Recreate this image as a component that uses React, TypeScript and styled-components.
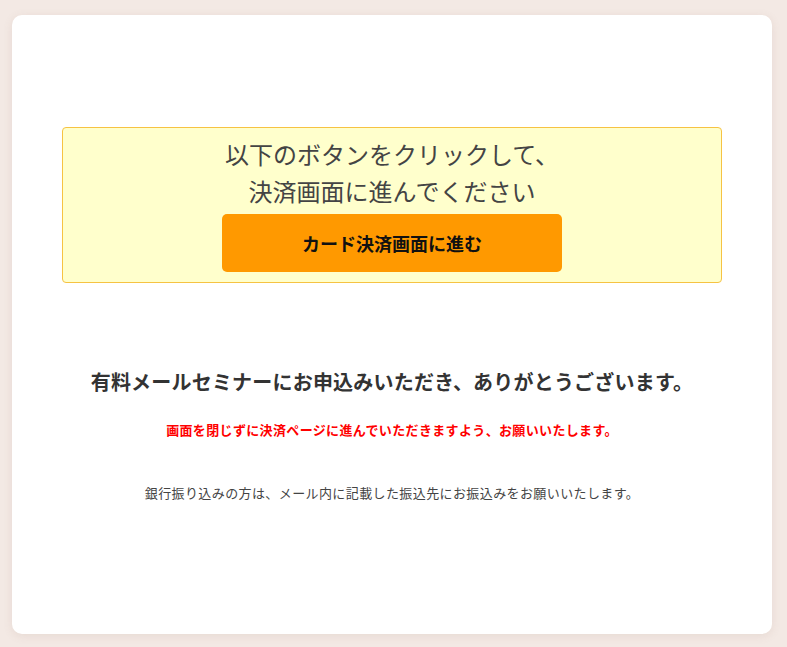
import React from "react";
import styled, { createGlobalStyle } from "styled-components";

const GlobalStyle = createGlobalStyle`
  html, body {
    margin: 0;
    padding: 0;
    background: #f3e9e4;
  }
  body {
    font-family: "Noto Sans CJK JP", "Noto Sans", sans-serif;
    color: #333;
  }
`;

const Page = styled.div`
  padding: 15px 15px 13px 12px;
  box-sizing: border-box;
  width: 787px;
  height: 647px;
`;

const Card = styled.main`
  width: 760px;
  height: 619px;
  box-sizing: border-box;
  background: #fff;
  border-radius: 10px;
  box-shadow: 0 2px 10px rgba(150, 110, 90, 0.12);
  padding: 112px 50px 0;
  display: flex;
  flex-direction: column;
  align-items: center;
`;

const Notice = styled.section`
  width: 100%;
  box-sizing: border-box;
  background: #ffffcc;
  border: 1px solid #f6c343;
  border-radius: 4px;
  padding: 7px 0 10px;
  display: flex;
  flex-direction: column;
  align-items: center;
`;

const Lead = styled.p`
  margin: 0;
  font-size: 24px;
  line-height: 37px;
  font-weight: 400;
  color: #444;
  text-align: center;
`;

const PayButton = styled.button`
  margin-top: 5px;
  width: 340px;
  height: 58px;
  border: none;
  border-radius: 5px;
  background: #ff9900;
  color: #111;
  font-family: inherit;
  font-size: 18px;
  font-weight: 700;
  cursor: pointer;
`;

const Thanks = styled.h1`
  margin: 84px 0 0;
  font-size: 20px;
  letter-spacing: 0.2px;
  line-height: 30px;
  font-weight: 700;
  color: #333;
  text-align: center;
`;

const Warning = styled.p`
  margin: 23px 0 0;
  font-size: 13px;
  letter-spacing: 0.35px;
  line-height: 20px;
  font-weight: 700;
  color: #ff0000;
  text-align: center;
`;

const Note = styled.p`
  margin: 43px 0 0;
  font-size: 13px;
  letter-spacing: 0.4px;
  line-height: 20px;
  font-weight: 400;
  color: #444;
  text-align: center;
`;

export default function App() {
  return (
    <>
      <GlobalStyle />
      <Page>
        <Card>
          <Notice>
            <Lead>
              以下のボタンをクリックして、
              <br />
              決済画面に進んでください
            </Lead>
            <PayButton type="button">カード決済画面に進む</PayButton>
          </Notice>
          <Thanks>有料メールセミナーにお申込みいただき、ありがとうございます。</Thanks>
          <Warning>画面を閉じずに決済ページに進んでいただきますよう、お願いいたします。</Warning>
          <Note>銀行振り込みの方は、メール内に記載した振込先にお振込みをお願いいたします。</Note>
        </Card>
      </Page>
    </>
  );
}
